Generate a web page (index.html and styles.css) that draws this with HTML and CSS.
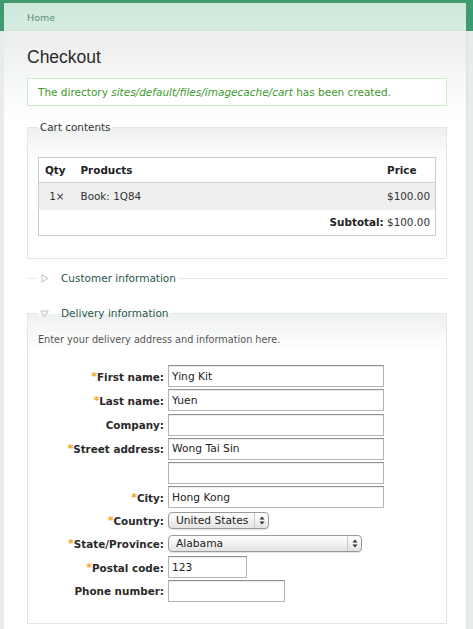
FILE: index.html
```html
<!DOCTYPE html>
<html>
<head>
<meta charset="utf-8">
<link rel="stylesheet" href="styles.css">
</head>
<body>
<div class="header">
  <div class="crumbs"><a href="#">Home</a></div>
</div>
<div class="page">
  <div class="main">
    <h1>Checkout</h1>
    <div class="status">The directory <em>sites/default/files/imagecache/cart</em> has been created.</div>

    <fieldset class="box cart">
      <legend>Cart contents</legend>
      <table class="cart-table">
        <colgroup><col class="c-qty"><col><col class="c-price"></colgroup>
        <thead>
          <tr><th class="qty">Qty</th><th>Products</th><th>Price</th></tr>
        </thead>
        <tbody>
          <tr class="odd"><td class="qty">1×</td><td>Book: 1Q84</td><td class="price">$100.00</td></tr>
          <tr><td colspan="3" class="price"><strong>Subtotal:</strong> $100.00</td></tr>
        </tbody>
      </table>
    </fieldset>

    <fieldset class="collapsed">
      <legend><svg class="tri" width="8" height="9" viewBox="0 0 8 9"><path d="M1 0.8 L6.8 4.5 L1 8.2 Z" fill="none" stroke="#b9bfbe" stroke-width="1"/></svg>Customer information</legend>
    </fieldset>

    <fieldset class="box delivery">
      <legend><svg class="tri down" width="9" height="8" viewBox="0 0 9 8"><path d="M0.8 1 L8.2 1 L4.5 6.8 Z" fill="none" stroke="#b9bfbe" stroke-width="1"/></svg>Delivery information</legend>
      <p class="desc">Enter your delivery address and information here.</p>
      <div class="form">
        <label><span class="req">*</span>First name:</label>
        <div class="field"><input class="text" type="text" value="Ying Kit"></div>

        <label><span class="req">*</span>Last name:</label>
        <div class="field"><input class="text" type="text" value="Yuen"></div>

        <label>Company:</label>
        <div class="field"><input class="text" type="text" value=""></div>

        <label><span class="req">*</span>Street address:</label>
        <div class="field"><input class="text" type="text" value="Wong Tai Sin"></div>

        <label></label>
        <div class="field"><input class="text" type="text" value=""></div>

        <label><span class="req">*</span>City:</label>
        <div class="field"><input class="text" type="text" value="Hong Kong"></div>

        <label><span class="req">*</span>Country:</label>
        <div class="field sel-row">
          <span class="select country">United States<span class="arrows"><svg width="6" height="9" viewBox="0 0 6 9"><path d="M3 0.5 L5.5 3.5 L0.5 3.5 Z M3 8.5 L5.5 5.5 L0.5 5.5 Z" fill="#333"/></svg></span></span>
        </div>

        <label><span class="req">*</span>State/Province:</label>
        <div class="field sel-row">
          <span class="select state">Alabama<span class="arrows"><svg width="6" height="9" viewBox="0 0 6 9"><path d="M3 0.5 L5.5 3.5 L0.5 3.5 Z M3 8.5 L5.5 5.5 L0.5 5.5 Z" fill="#333"/></svg></span></span>
        </div>

        <label><span class="req">*</span>Postal code:</label>
        <div class="field"><input class="text postal" type="text" value="123"></div>

        <label>Phone number:</label>
        <div class="field"><input class="text phone" type="text" value=""></div>
      </div>
    </fieldset>
  </div>
</div>
</body>
</html>
```

FILE: styles.css
```css
* { box-sizing: border-box; }
html, body { margin: 0; padding: 0; }
body {
  background: #e8ecea;
  font-family: "DejaVu Sans", Verdana, sans-serif;
  font-size: 10.4px;
  color: #333;
  width: 473px;
  height: 629px;
  overflow: hidden;
}
.header {
  background: #3f9b6f;
  padding: 3px 7px 0 4px;
}
.crumbs {
  height: 28px;
  background: linear-gradient(to bottom, #cde8da, #d5ede1);
  padding: 0 0 0 23px;
  display: flex;
  align-items: center;
  font-size: 9.5px;
}
.crumbs a {
  color: #5b8b7b;
  text-decoration: none;
}
.page {
  padding: 0 7px 0 4px;
  background: #e8ecea;
}
.main {
  background: linear-gradient(to bottom, #ebeeed 0px, #ffffff 90px);
  padding: 15px 19px 20px 23px;
  box-shadow: 1px 0 2px rgba(0,0,0,0.06);
  min-height: 600px;
}
h1 {
  margin: 0;
  font-family: "Liberation Sans", Arial, sans-serif;
  font-weight: normal;
  font-size: 17.5px;
  line-height: 22px;
  color: #2b2b2b;
}
.status {
  margin-top: 10px;
  border: 1px solid #c9efc6;
  background: #fff;
  padding: 6px 10px;
  line-height: 14px;
  font-size: 10.5px;
  color: #3d9a2e;
}
.status em { font-style: italic; }

fieldset {
  margin: 0;
  min-width: 0;
}
legend {
  padding: 0 2px;
  line-height: 14px;
  font-size: 10.4px;
}
.box {
  border: 1px solid #e1e7e6;
  background: linear-gradient(to bottom, #eef1f0 0px, #ffffff 36px);
  padding: 0 10px;
}
.cart {
  margin-top: 14px;
  padding-top: 23px;
  padding-bottom: 22px;
}
.cart legend { color: #333; }

.cart-table {
  width: 100%;
  border-collapse: collapse;
  border: 1px solid #c9cdcc;
  background: #fff;
}
.c-qty { width: 36px; }
.c-price { width: 54px; }
.cart-table th {
  text-align: left;
  font-weight: bold;
  height: 25px;
  padding: 0 6px;
  border-bottom: 1px solid #cdd3d2;
  color: #222;
}
.cart-table td {
  padding: 0 5px 0 6px;
  height: 26px;
  color: #333;
}
.cart-table td.qty { text-align: right; padding-right: 10px; }
.cart-table td.price { text-align: right; }
.cart-table tr.odd td { background: #edf0ef; height: 27px; }
.cart-table strong { color: #222; }

.collapsed {
  margin-top: 12px;
  border: none;
  border-top: 1px solid #e1e7e6;
  padding: 0 10px;
  height: 14px;
}
.collapsed legend, .delivery legend {
  color: #28574a;
  font-size: 10.5px;
}
.tri {
  display: inline-block;
  vertical-align: -1px;
  margin: 0 12px 0 2px;
}
.tri.down {
  margin: 0 12px 0 0;
}

.delivery {
  margin-top: 21px;
  padding-top: 14px;
  padding-bottom: 20px;
}
.desc {
  margin: 0;
  line-height: 12px;
  font-size: 9.7px;
  color: #555;
}
.form {
  margin-top: 19px;
  display: grid;
  grid-template-columns: 126px 1fr;
  column-gap: 4px;
  row-gap: 1.8px;
  align-items: center;
}
.form label {
  text-align: right;
  font-weight: bold;
  color: #2a2a2a;
  white-space: nowrap;
}
.req {
  color: #f0a418;
  font-size: 11px;
  vertical-align: 1px;
}
.field {
  display: flex;
  align-items: center;
  height: 22.4px;
}
.text {
  width: 216px;
  height: 22px;
  border: 1px solid #b4b4b4;
  border-top-color: #8f8f8f;
  box-shadow: inset 0 1px 1px rgba(0,0,0,0.08);
  padding: 0 3px;
  font-family: "DejaVu Sans", Verdana, sans-serif;
  font-size: 10.7px;
  color: #222;
  background: #fff;
  margin: 0;
}
.text.postal { width: 79px; }
.text.phone { width: 117px; }

.sel-row { height: 21.2px; }
.select {
  position: relative;
  display: inline-flex;
  align-items: center;
  height: 17px;
  border: 1px solid #9a9a9a;
  border-radius: 4px;
  background: linear-gradient(to bottom, #ffffff, #f2f2f2 50%, #e3e3e3);
  box-shadow: 0 1px 1px rgba(0,0,0,0.12);
  padding-left: 7px;
  font-size: 10.7px;
  color: #222;
}
.select.country { width: 101px; }
.select.state { width: 194px; }
.arrows {
  position: absolute;
  right: 0;
  top: 0;
  bottom: 0;
  width: 14px;
  border-left: 1px solid #c8c8c8;
  display: flex;
  align-items: center;
  justify-content: center;
}
```
